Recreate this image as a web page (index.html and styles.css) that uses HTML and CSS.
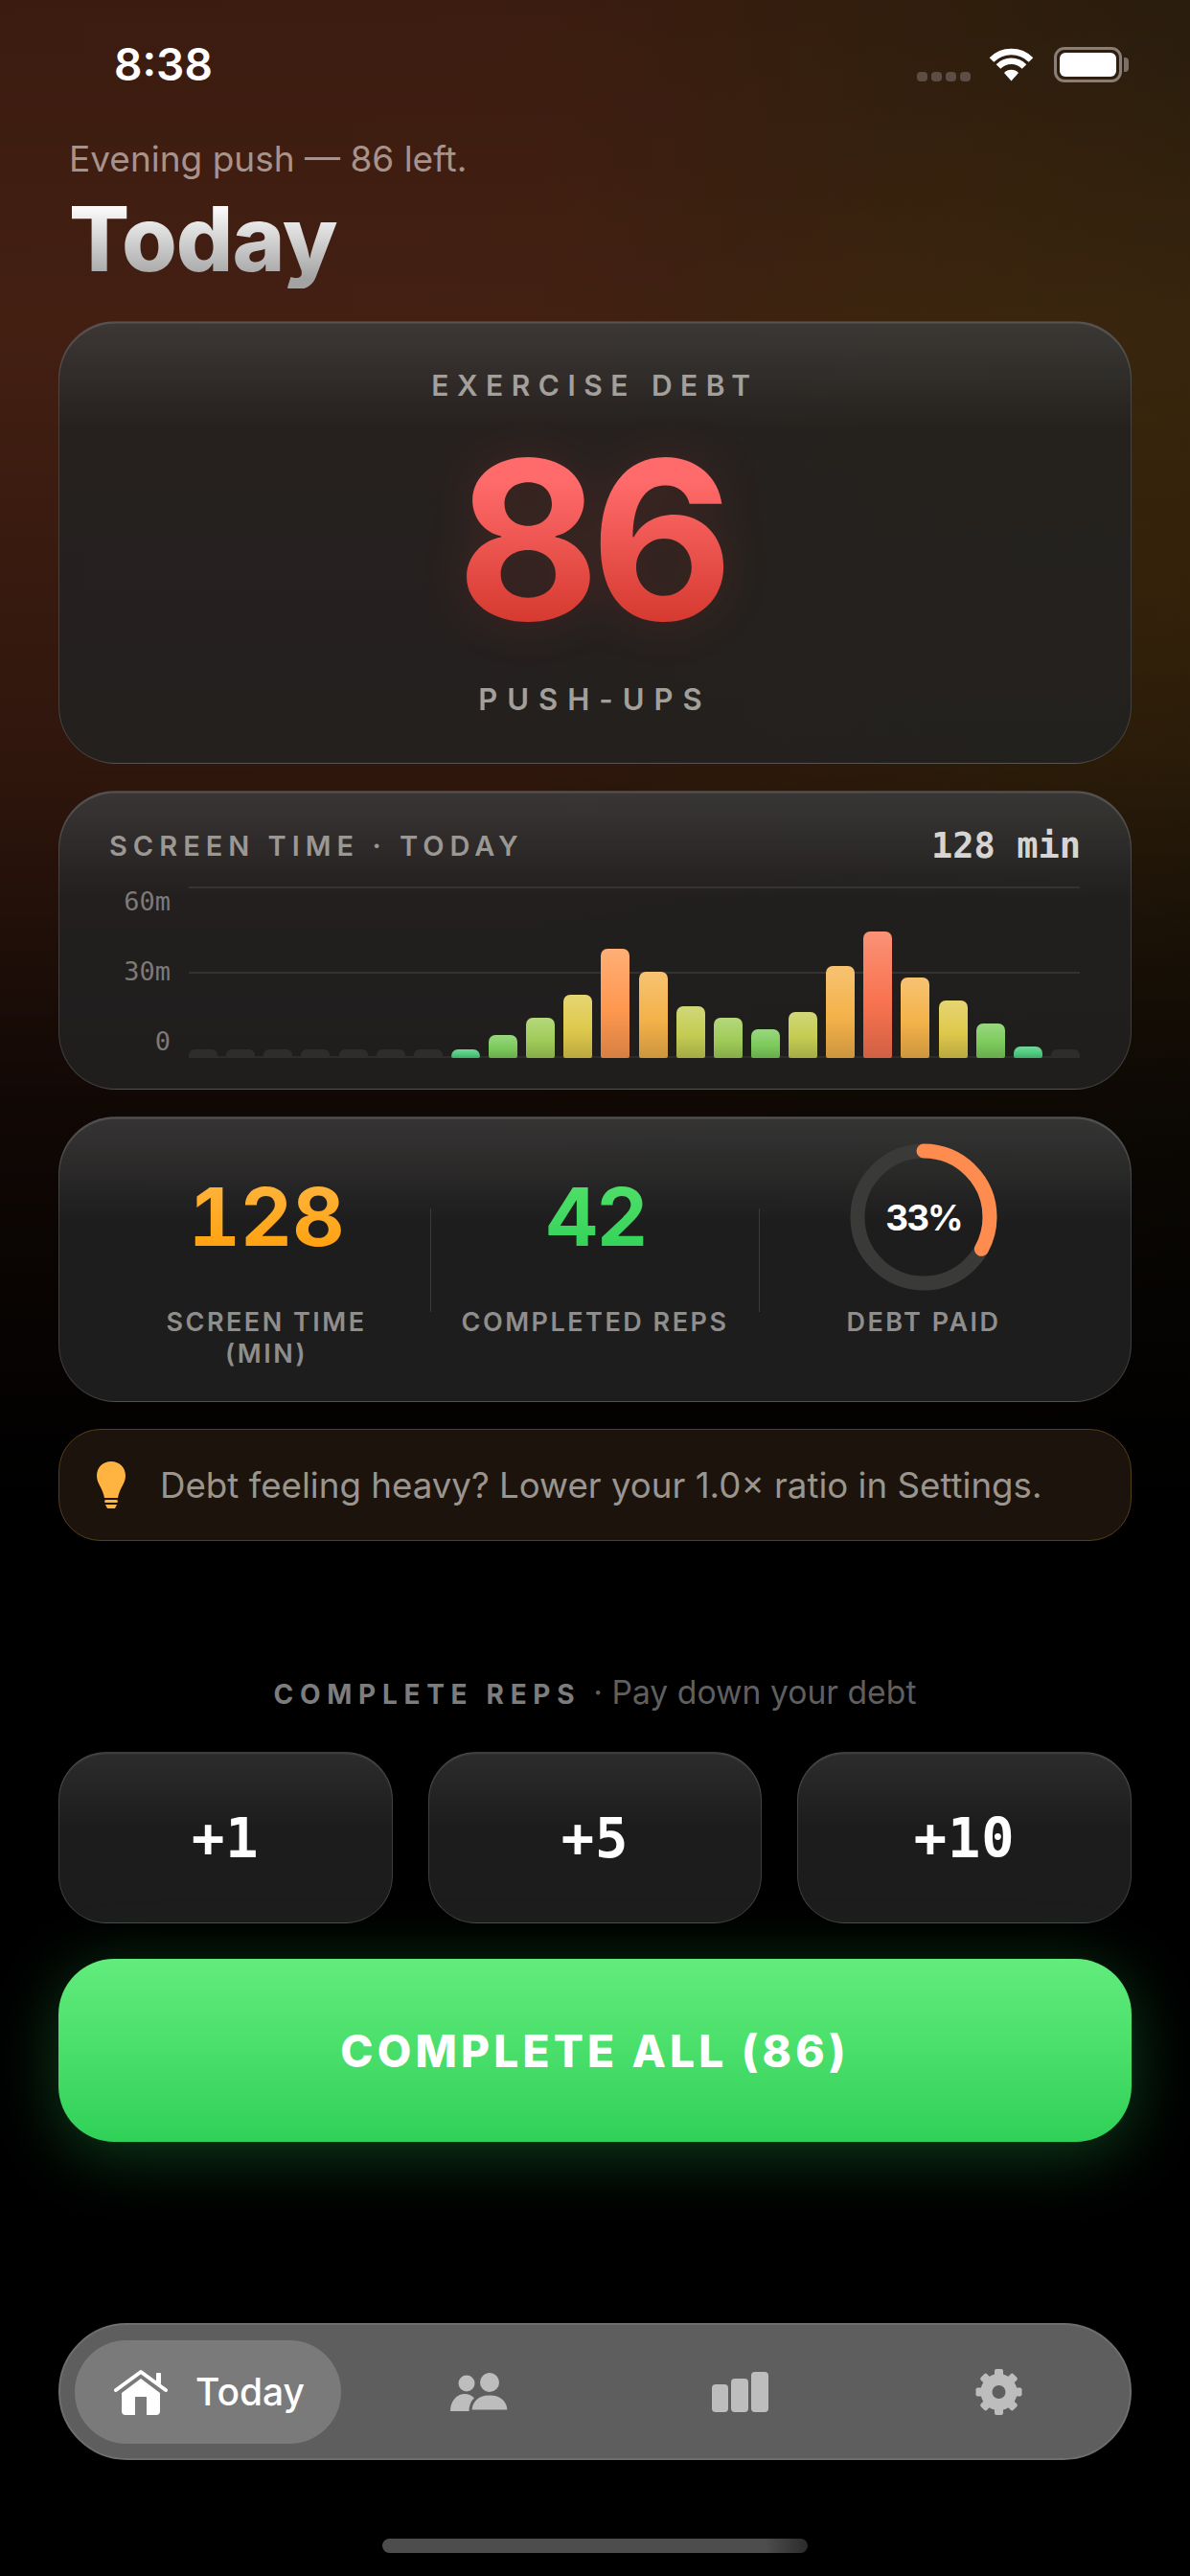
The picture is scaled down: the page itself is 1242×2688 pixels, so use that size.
FILE: index.html
```html
<!DOCTYPE html>
<html lang="en">
<head>
  <meta charset="UTF-8" />
  <title>Today</title>
  <link rel="stylesheet" href="styles.css">
</head>
<body>
  <div class="screen">

    <div class="status-bar">
      <span class="clock">8:38</span>
      <div class="status-icons">
        <div class="signal"><i></i><i></i><i></i><i></i></div>
        <svg class="wifi" width="47" height="36" viewBox="0 0 47 36">
          <path d="M3 13.500a29 29 0 0 1 41 0M10 20.500a19 19 0 0 1 27 0" fill="none" stroke="#fff" stroke-width="6.500"/>
          <path d="M23.500 35.500L16 27a10.500 10.500 0 0 1 15 0z" fill="#fff"/>
        </svg>
        <div class="battery"><i></i></div>
        <div class="battery-nub"></div>
      </div>
    </div>

    <header class="page-head">
      <p class="greeting">Evening push — 86 left.</p>
      <h1 class="title">Today</h1>
    </header>

    <section class="card debt-card">
      <div class="debt-label">EXERCISE DEBT</div>
      <div class="debt-number">86</div>
      <div class="debt-label debt-unit">PUSH-UPS</div>
    </section>

    <section class="card chart-card">
      <div class="chart-head">
        <span class="chart-title">SCREEN TIME · TODAY</span>
        <span class="chart-total">128 min</span>
      </div>
      <div class="chart">
        <div class="axis"><span>60m</span><span>30m</span><span>0</span></div>
        <div class="plot">
          <i class="bar empty"></i>
          <i class="bar empty"></i>
          <i class="bar empty"></i>
          <i class="bar empty"></i>
          <i class="bar empty"></i>
          <i class="bar empty"></i>
          <i class="bar empty"></i>
          <i class="bar teal" style="height:9px"></i>
          <i class="bar green" style="height:24px"></i>
          <i class="bar lime" style="height:42px"></i>
          <i class="bar yellow" style="height:66px"></i>
          <i class="bar orange" style="height:114px"></i>
          <i class="bar amber" style="height:90px"></i>
          <i class="bar olive" style="height:54px"></i>
          <i class="bar lime" style="height:42px"></i>
          <i class="bar green" style="height:30px"></i>
          <i class="bar olive" style="height:48px"></i>
          <i class="bar amber" style="height:96px"></i>
          <i class="bar red" style="height:132px"></i>
          <i class="bar amber" style="height:84px"></i>
          <i class="bar yellow" style="height:60px"></i>
          <i class="bar green" style="height:36px"></i>
          <i class="bar teal" style="height:12px"></i>
          <i class="bar empty"></i>
        </div>
      </div>
    </section>

    <section class="card stats-card">
      <div class="stat">
        <div class="stat-value"><span class="num num-orange">128</span></div>
        <div class="stat-label">SCREEN TIME<br>(MIN)</div>
      </div>
      <div class="divider"></div>
      <div class="stat">
        <div class="stat-value"><span class="num num-green">42</span></div>
        <div class="stat-label">COMPLETED REPS</div>
      </div>
      <div class="divider"></div>
      <div class="stat">
        <div class="stat-value ring-wrap">
          <svg class="ring" width="154" height="154" viewBox="0 0 154 154">
            <circle cx="77" cy="77" r="69" fill="none" stroke="#3a3a39" stroke-width="15"/>
            <circle cx="77" cy="77" r="69" fill="none" stroke="#ff8c4f" stroke-width="15" stroke-linecap="round" stroke-dasharray="143 434" transform="rotate(-90 77 77)"/>
          </svg>
          <span class="ring-text">33%</span>
        </div>
        <div class="stat-label">DEBT PAID</div>
      </div>
    </section>

    <section class="tip">
      <svg class="bulb" width="30" height="49" viewBox="0 0 30 49">
        <path d="M15 0C6 0 0 6.500 0 15c0 8 6 12 8 23h14c2-11 8-15 8-23C30 6.500 24 0 15 0z" fill="#ffb340"/>
        <rect x="8" y="40" width="14" height="3" rx="1.500" fill="#ffb340"/>
        <path d="M9 45h12l-2 4h-8z" fill="#ffb340"/>
      </svg>
      <span>Debt feeling heavy? Lower your 1.0× ratio in Settings.</span>
    </section>

    <div class="reps-head">
      <span class="reps-title">COMPLETE REPS</span>
      <span class="reps-sub">· Pay down your debt</span>
    </div>

    <div class="reps-row">
      <button class="rep-btn">+1</button>
      <button class="rep-btn">+5</button>
      <button class="rep-btn">+10</button>
    </div>

    <button class="complete-btn">COMPLETE ALL (86)</button>

    <nav class="tab-bar">
      <div class="tab tab-active">
        <svg width="56" height="48" viewBox="0 0 56 48">
          <path d="M2 22L28 3l26 19" fill="none" stroke="#fff" stroke-width="4" stroke-linecap="round" stroke-linejoin="round"/>
          <rect x="44" y="4" width="5" height="12" rx="1" fill="#fff"/>
          <path fill-rule="evenodd" d="M28 10l20 15v19a4 4 0 0 1-4 4H12a4 4 0 0 1-4-4V25zM22 29v19h12V29z" fill="#fff"/>
        </svg>
        <span>Today</span>
      </div>
      <div class="tab tab-people">
        <svg width="61" height="40" viewBox="0 0 61 40">
          <circle cx="17" cy="11" r="8.500" fill="#bdbdbd"/>
          <path d="M0 40c0-11 7-18 15-18s15 7 15 18z" fill="#bdbdbd"/>
          <circle cx="41" cy="10" r="10" fill="#bdbdbd"/>
          <path d="M21 40c0-11 8-18 20-18s20 7 20 18z" fill="#bdbdbd" stroke="#5e5e5e" stroke-width="3"/>
        </svg>
      </div>
      <div class="tab tab-stats">
        <svg width="59" height="42" viewBox="0 0 59 42">
          <rect x="0" y="13" width="17" height="29" rx="4" fill="#bdbdbd"/>
          <rect x="20" y="7" width="18" height="35" rx="4" fill="#bdbdbd"/>
          <rect x="41" y="0" width="18" height="42" rx="4" fill="#bdbdbd"/>
        </svg>
      </div>
      <div class="tab tab-gear">
        <svg width="49" height="48" viewBox="-24.500 -24 49 48">
          <circle r="13" fill="none" stroke="#bdbdbd" stroke-width="12"/>
          <g fill="#bdbdbd">
            <rect x="-4.500" y="-24" width="9" height="10" rx="2"/>
            <rect x="-4.500" y="-24" width="9" height="10" rx="2" transform="rotate(45)"/>
            <rect x="-4.500" y="-24" width="9" height="10" rx="2" transform="rotate(90)"/>
            <rect x="-4.500" y="-24" width="9" height="10" rx="2" transform="rotate(135)"/>
            <rect x="-4.500" y="-24" width="9" height="10" rx="2" transform="rotate(180)"/>
            <rect x="-4.500" y="-24" width="9" height="10" rx="2" transform="rotate(225)"/>
            <rect x="-4.500" y="-24" width="9" height="10" rx="2" transform="rotate(270)"/>
            <rect x="-4.500" y="-24" width="9" height="10" rx="2" transform="rotate(315)"/>
          </g>
        </svg>
      </div>
    </nav>

    <div class="home-indicator"></div>
  </div>
</body>
</html>
```

FILE: styles.css
```css
* {
  box-sizing: border-box;
}

body {
  margin: 0;
  background: #000;
  font-family: Inter, "Liberation Sans", sans-serif;
}

.screen {
  width: 1242px;
  height: 2688px;
  overflow: hidden;
  padding: 49px 61px 0;
  display: flex;
  flex-direction: column;
  background:
    linear-gradient(180deg, rgba(0,0,0,.12) 0, rgba(0,0,0,0) 340px, rgba(0,0,0,.3) 800px, rgba(0,0,0,.75) 1150px, #000 1560px),
    radial-gradient(620px 620px at 1242px 640px, rgba(92,58,8,.35), rgba(92,58,8,0)),
    linear-gradient(90deg, #431f12 0, #432012 45%, #38220f 75%, #2f200e 100%);
}

/* status bar */
.status-bar {
  height: 37px;
  display: flex;
  justify-content: space-between;
  padding-left: 58px;
}

.clock {
  color: #fff;
  font-size: 46px;
  font-weight: 600;
  line-height: 37px;
}

.status-icons {
  flex: none;
  display: flex;
  align-items: flex-start;
  margin-right: 3px;
}

.signal {
  display: flex;
  gap: 4px;
  margin-top: 26px;
  margin-right: 19px;
}

.signal i {
  width: 11px;
  height: 10px;
  border-radius: 4px;
  background: #5c4d45;
}

.wifi {
  margin-right: 21px;
}

.battery {
  width: 71px;
  height: 37px;
  border: 3px solid #8a7f78;
  border-radius: 11px;
  padding: 3px;
}

.battery i {
  display: block;
  height: 100%;
  background: #fff;
  border-radius: 6px;
}

.battery-nub {
  width: 5px;
  height: 15px;
  margin: 11px 0 0 2px;
  background: #7a6e66;
  border-radius: 0 4px 4px 0;
}

/* heading */
.page-head {
  padding-left: 11px;
  height: 249px;
}

.greeting {
  margin: 58px 0 0;
  font-size: 37px;
  line-height: 44px;
  color: #a8938c;
}

.title {
  margin: 9px 0 0;
  display: inline-block;
  font-size: 93.500px;
  line-height: 104px;
  font-weight: 800;
  letter-spacing: -1px;
  background: linear-gradient(180deg, #fff 15%, #a3a3a3 90%);
  -webkit-background-clip: text;
  background-clip: text;
  color: transparent;
}

/* cards */
.card {
  width: 1120px;
  border: 1.500px solid rgba(255,255,255,.15);
  border-radius: 60px;
  background:
    linear-gradient(180deg, rgba(255,255,255,.1), rgba(255,255,255,0) 110px),
    rgba(34,34,34,.85);
  box-shadow: inset 0 1.500px 0 rgba(255,255,255,.14);
}

.debt-card {
  height: 462px;
  padding-top: 48px;
  display: flex;
  flex-direction: column;
  align-items: center;
}

.debt-label {
  font-size: 30px;
  line-height: 36px;
  font-weight: 600;
  letter-spacing: 8.500px;
  color: #a3a09c;
}

.debt-number {
  height: 224px;
  margin: 31px 10px 0 0;
  font-size: 230px;
  line-height: 224px;
  font-weight: 700;
  letter-spacing: -10px;
  background: linear-gradient(180deg, #ff6b6b 22%, #d63a30 88%);
  -webkit-background-clip: text;
  background-clip: text;
  color: transparent;
  filter: drop-shadow(0 0 24px rgba(255,69,58,.14));
}

.debt-unit {
  margin-top: 37px;
  font-size: 31px;
  letter-spacing: 10px;
}

.chart-card {
  height: 312px;
  margin-top: 28px;
  padding: 0 52px;
}

.chart-head {
  height: 99px;
  padding-top: 41px;
  display: flex;
  justify-content: space-between;
}

.chart-title {
  font-family: Inter, sans-serif;
  font-size: 29px;
  line-height: 32px;
  font-weight: 600;
  letter-spacing: 6px;
  color: #9b9894;
}

.chart-total {
  font-family: "DejaVu Sans Mono", monospace;
  font-size: 37px;
  line-height: 32px;
  font-weight: 700;
  color: #d6d5d3;
}

.chart {
  display: flex;
  gap: 19px;
}

.axis {
  width: 64px;
  height: 179px;
  padding: 4px 0 5px;
  display: flex;
  flex-direction: column;
  justify-content: space-between;
  align-items: flex-end;
  font-family: "DejaVu Sans Mono", monospace;
  font-size: 27px;
  line-height: 24px;
  color: #7c7a78;
}

.plot {
  width: 930px;
  height: 179px;
  display: flex;
  justify-content: space-between;
  align-items: flex-end;
  background-image:
    linear-gradient(#353331, #353331),
    linear-gradient(#353331, #353331),
    linear-gradient(#2e2c2a, #2e2c2a);
  background-size: 100% 2px;
  background-repeat: no-repeat;
  background-position: top, center, bottom;
}

.bar {
  width: 30px;
  border-radius: 7px 7px 2px 2px;
  background-image: linear-gradient(180deg, rgba(255,255,255,.22), rgba(255,255,255,0) 55%, rgba(0,0,0,.16));
}

.bar.empty {
  height: 9px;
  border-radius: 6px 6px 2px 2px;
  background: #2f2d2c;
}

.teal { background-color: #4fcb7f; }
.green { background-color: #7dcb5c; }
.lime { background-color: #a0cc58; }
.olive { background-color: #c4cc52; }
.yellow { background-color: #dfc94c; }
.amber { background-color: #f4b24a; }
.orange { background-color: #ff9850; }
.red { background-color: #f97350; }

.stats-card {
  height: 298px;
  margin-top: 28px;
  padding: 27px 45px 0;
  display: flex;
  align-items: flex-start;
}

.stat {
  flex: 1;
  display: flex;
  flex-direction: column;
  align-items: center;
}

.stat-value {
  height: 154px;
  display: flex;
  align-items: center;
  justify-content: center;
}

.num {
  font-size: 84px;
  line-height: 84px;
  font-weight: 700;
  -webkit-background-clip: text;
  background-clip: text;
  color: transparent;
}

.num-orange {
  font-variant-numeric: tabular-nums;
  background-image: linear-gradient(180deg, #ffb53f, #ff9f0a);
}

.num-green {
  letter-spacing: -2px;
  background-image: linear-gradient(180deg, #52e06a, #30d158);
}

.stat-label {
  margin-top: 16px;
  text-align: center;
  font-size: 27px;
  line-height: 33px;
  font-weight: 600;
  letter-spacing: 2.500px;
  color: #8f8e8c;
}

.divider {
  width: 1px;
  height: 108px;
  margin-top: 68px;
  background: #3a3a39;
}

.ring-wrap {
  position: relative;
  width: 154px;
}

.ring {
  position: absolute;
  left: 0;
  top: 0;
}

.ring-text {
  font-size: 37px;
  font-weight: 700;
  letter-spacing: -2px;
  color: #fff;
}

/* tip */
.tip {
  width: 1120px;
  height: 117px;
  margin-top: 28px;
  padding-left: 39px;
  display: flex;
  align-items: center;
  gap: 36px;
  border: 1.500px solid #573d1c;
  border-radius: 44px;
  background: #1c130c;
  font-size: 36.700px;
  color: #9a958e;
}

/* reps */
.reps-head {
  margin-top: 137px;
  height: 40px;
  display: flex;
  justify-content: center;
  align-items: baseline;
  gap: 13px;
}

.reps-title {
  font-size: 28px;
  font-weight: 700;
  letter-spacing: 6.700px;
  color: #7d7d7d;
}

.reps-sub {
  font-size: 33.700px;
  color: #5f5f5f;
}

.reps-row {
  margin-top: 43px;
  display: flex;
  gap: 37px;
}

.rep-btn {
  flex: 1;
  height: 179px;
  border: 1.500px solid rgba(255,255,255,.15);
  border-radius: 50px;
  background: linear-gradient(180deg, #2c2c2c, #1c1c1c 45%);
  box-shadow: inset 0 1.500px 0 rgba(255,255,255,.08);
  font-family: "DejaVu Sans Mono", monospace;
  font-size: 57px;
  font-weight: 700;
  letter-spacing: 1px;
  color: #fff;
}

.complete-btn {
  width: 1120px;
  height: 191px;
  margin-top: 37px;
  border: none;
  border-radius: 58px;
  background: linear-gradient(180deg, #62ec7c, #30d158);
  box-shadow: 0 12px 70px rgba(48,209,88,.3);
  font-family: Inter, sans-serif;
  font-size: 46px;
  font-weight: 800;
  letter-spacing: 4.200px;
  color: #fff;
}

/* tab bar */
.tab-bar {
  width: 1120px;
  height: 143px;
  margin-top: 189px;
  padding-left: 15px;
  display: flex;
  align-items: center;
  border: 2px solid #6e6e6e;
  border-radius: 72px;
  background: #5e5e5e;
}

.tab {
  width: 276px;
  display: flex;
  justify-content: center;
  align-items: center;
}

.tab-active {
  width: 281px;
  height: 108px;
  gap: 29px;
  justify-content: flex-start;
  padding-left: 41px;
  border-radius: 54px;
  background: #7a7a7a;
  font-size: 39px;
  font-weight: 500;
  color: #fff;
}

.tab-people {
  margin-left: 8px;
}

.tab-stats {
  margin-left: -1px;
}

.tab-gear {
  margin-left: -3px;
}

.home-indicator {
  width: 444px;
  height: 15px;
  margin: 82px auto 0;
  border-radius: 8px;
  background: linear-gradient(90deg, #4d4d4d 90%, #2b2b2b);
}
```
